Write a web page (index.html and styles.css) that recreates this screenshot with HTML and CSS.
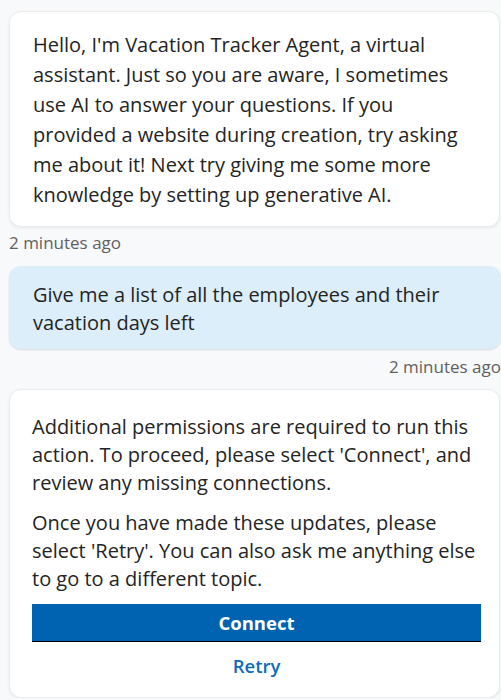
FILE: index.html
```html
<!DOCTYPE html>
<html lang="en">
<head>
<meta charset="utf-8">
<title>Vacation Tracker Agent</title>
<link rel="stylesheet" href="styles.css">
</head>
<body>
<main class="chat">
  <section class="msg msg-bot">
    <div class="bubble card">
      <p class="text text-loose">Hello, I'm Vacation Tracker Agent, a virtual assistant. Just so you are aware, I sometimes use AI to answer your questions. If you provided a website during creation, try asking me about it! Next try giving me some more knowledge by setting up generative AI.</p>
    </div>
    <div class="time">2 minutes ago</div>
  </section>

  <section class="msg msg-user">
    <div class="bubble user-bubble">
      <p class="text">Give me a list of all the employees and their vacation days left</p>
    </div>
    <div class="time time-right">2 minutes ago</div>
  </section>

  <section class="msg msg-bot">
    <div class="bubble card card-actions">
      <p class="text">Additional permissions are required to run this action. To proceed, please select 'Connect', and review any missing connections.</p>
      <p class="text text-gap">Once you have made these updates, please select 'Retry'. You can also ask me anything else to go to a different topic.</p>
      <div class="actions">
        <button class="btn btn-primary" type="button">Connect</button>
        <button class="btn btn-link" type="button">Retry</button>
      </div>
    </div>
  </section>
</main>
</body>
</html>
```

FILE: styles.css
```css
html, body {
  margin: 0;
  padding: 0;
}

body {
  background: #f8f9fb;
  font-family: "Open Sans", "Noto Sans", sans-serif;
  color: #242424;
  overflow: hidden;
}

.chat {
  width: 492px;
  padding: 11px 0 0 9px;
  display: flex;
  flex-direction: column;
}

.msg {
  display: flex;
  flex-direction: column;
}

.bubble {
  border-radius: 12px;
}

.card {
  background: #ffffff;
  border: 1px solid #ececec;
  box-shadow: 0 1px 3px rgba(0, 0, 0, 0.07);
  padding: 18px 25px 16px 23px;
  margin-right: 1px;
}

.text {
  margin: 0;
  font-size: 20px;
  line-height: 28px;
}

.text-loose {
  line-height: 30px;
}

.text-gap {
  margin-top: 12px;
}

.time {
  font-size: 17px;
  line-height: 22px;
  color: #616161;
  margin-top: 5px;
}

.time-right {
  text-align: right;
  margin-top: 7px;
}

.msg-user {
  margin-top: 12px;
}

.user-bubble {
  background: #dceef9;
  box-shadow: 0 1px 2px rgba(0, 0, 0, 0.12);
  padding: 15px 24px 12px 24px;
}

.msg-user + .msg-bot {
  margin-top: 11px;
}

.card-actions {
  padding: 23px 18px 9px 22px;
}

.actions {
  display: flex;
  flex-direction: column;
  margin-top: 11px;
}

.btn {
  font-family: "Open Sans", "Noto Sans", sans-serif;
  font-size: 18.5px;
  border: 0;
  cursor: pointer;
  text-align: center;
}

.btn-primary {
  background: #0063b1;
  color: #ffffff;
  font-weight: 700;
  height: 38px;
  line-height: 36px;
  padding: 0;
  border-bottom: 1px solid #000000;
}

.btn-link {
  background: transparent;
  color: #0f6cbd;
  font-weight: 600;
  margin-top: 2px;
  height: 44px;
  line-height: 24px;
  padding: 10px 0;
}
```
